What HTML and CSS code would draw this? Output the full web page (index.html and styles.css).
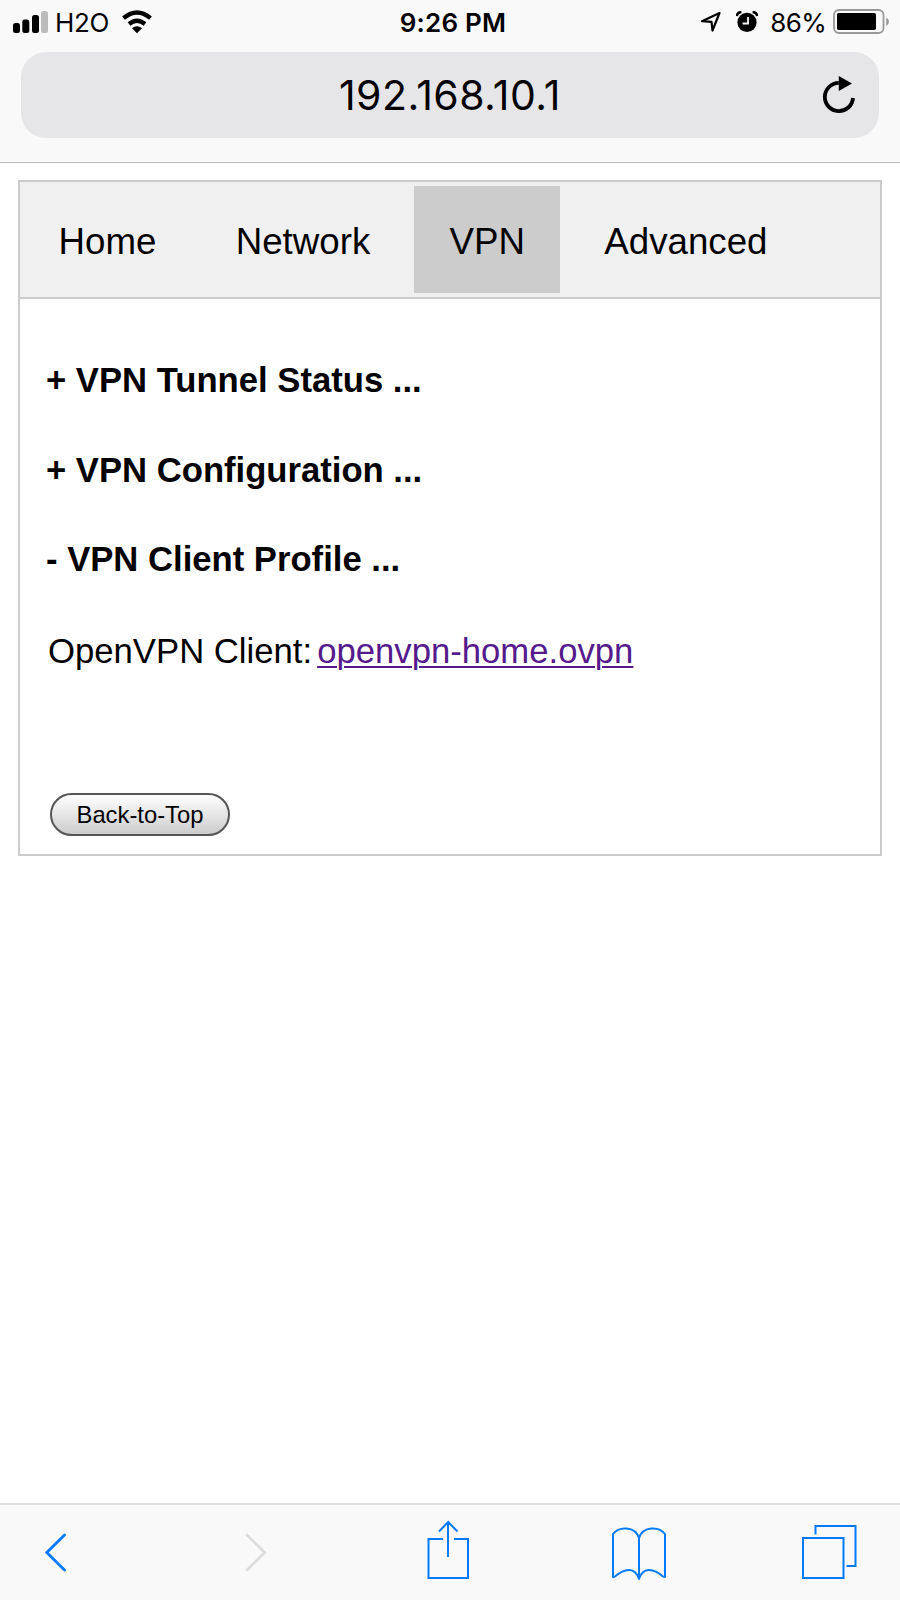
FILE: index.html
```
<!DOCTYPE html>
<html lang="en">
<head>
    <meta charset="UTF-8">
    <meta name="viewport" content="width=device-width, initial-scale=1.0">
    <title>VPN</title>
    <link rel="stylesheet" href="styles.css">
</head>
<body>
    <header class="browser-top">
        <div class="status-bar">
            <div class="status-left">
                <svg class="signal" width="36" height="24" viewBox="0 0 36 24">
                    <rect x="0" y="13" width="7" height="10" rx="2.5"/>
                    <rect x="9.3" y="9.5" width="7" height="13.5" rx="2.5"/>
                    <rect x="19" y="5" width="7" height="18" rx="2.5"/>
                    <rect x="28" y="1" width="7" height="22" rx="2.5" fill="#bbb"/>
                </svg>
                <span class="carrier">H2O</span>
                <svg class="wifi" width="32" height="24" viewBox="0 0 32 24">
                    <path d="M2.5 8.2Q16-3.2 29.5 8.2M8 14Q16 7.5 24 14" fill="none" stroke="#000" stroke-width="4.3"/>
                    <path d="M11 18.3Q16 14.2 21 18.3L16 23.2Z"/>
                </svg>
            </div>
            <span class="time">9:26 PM</span>
            <div class="status-right">
                <svg class="location" width="22" height="22" viewBox="0 0 22 22">
                    <path d="M2 10.2L19.5 2L12.5 19.5L11.5 10.8Z" fill="none" stroke="#000" stroke-width="2.2" stroke-linejoin="round"/>
                </svg>
                <svg class="alarm" width="22" height="22" viewBox="0 0 22 22">
                    <circle cx="11" cy="11.4" r="9.6"/>
                    <path d="M.8 5.2Q1.2 1 5.4 1.2M21.2 5.2Q20.8 1 16.6 1.2" fill="none" stroke="#000" stroke-width="2.6"/>
                    <path d="M12 6v6.5H6.5" fill="none" stroke="#f9f9f9" stroke-width="1.8"/>
                </svg>
                <span class="percent">86%</span>
                <svg class="battery" width="57" height="26" viewBox="0 0 57 26">
                    <rect x="1" y="1" width="49.5" height="23" rx="5" fill="none" stroke="#999" stroke-width="1.8"/>
                    <rect x="4" y="4" width="39" height="17" rx="1.8"/>
                    <path d="M53.2 8.5Q56 10 56 12.7Q56 15.5 53.2 17Z" fill="#999"/>
                </svg>
            </div>
        </div>
        <div class="address-bar">
            <span class="url">192.168.10.1</span>
            <svg class="reload" width="34" height="40" viewBox="0 0 34 40">
                <path d="M16.8 7.9A14.1 14.1 0 1 0 31 23" fill="none" stroke="#000" stroke-width="3.8"/>
                <path d="M16.8 1L30 8.5L16.8 16Z"/>
            </svg>
        </div>
    </header>

    <main class="page">
        <div class="panel">
            <nav class="tabs">
                <a class="tab home">Home</a>
                <a class="tab network">Network</a>
                <a class="tab vpn active">VPN</a>
                <a class="tab advanced">Advanced</a>
            </nav>
            <div class="content">
                <h3 class="tunnel">+ VPN Tunnel Status ...</h3>
                <h3 class="config">+ VPN Configuration ...</h3>
                <h3 class="profile">- VPN Client Profile ...</h3>
                <p class="client"><span>OpenVPN Client:</span><a href="#">openvpn-home.ovpn</a></p>
                <button class="to-top">Back-to-Top</button>
            </div>
        </div>
    </main>

    <footer class="toolbar">
        <svg class="back" width="22" height="40" viewBox="0 0 22 40">
            <path d="M19.5 2L1.8 19.5L19.5 37" stroke-width="2.8" stroke-linecap="round"/>
        </svg>
        <svg class="forward" width="22" height="40" viewBox="0 0 22 40">
            <path d="M2 2L19.7 19.5L2 37" stroke-width="2.8" stroke-linecap="round"/>
        </svg>
        <svg class="share" width="42" height="60" viewBox="0 0 42 60">
            <path d="M16 19H1.5V58H41V19H27M21 37V2M12 11.5L21.2 2L30.5 11.5"/>
        </svg>
        <svg class="book" width="56" height="54" viewBox="0 0 56 54">
            <path d="M28 11C24-1 8-1 2 7V49Q1.7 51 4 49.5C14 41 24 40 28 52C32 40 42 41 52 49.5Q54.3 51 54 49V7C48-1 32-1 28 11V52" stroke-linejoin="round"/>
        </svg>
        <svg class="pages" width="56" height="56" viewBox="0 0 56 56">
            <path d="M2 14H42.5V54H2ZM14.5 10.5V2H54.5V42H45.5"/>
        </svg>
    </footer>
</body>
</html>
```

FILE: styles.css
```
* {
    margin: 0;
    padding: 0;
    box-sizing: border-box;
}

body {
    display: flex;
    flex-direction: column;
    height: 1600px;
    background-color: #fff;
    color: #000;
    font-family: "Liberation Sans", Arial, sans-serif;
}

svg {
    display: block;
    flex: none;
}

/* Browser top */
.browser-top {
    height: 163px;
    background-color: #f9f9f9;
    border-bottom: 1px solid #b8b8b8;
    font-family: Inter, sans-serif;
}

.status-bar {
    display: grid;
    grid-template-columns: 1fr auto 1fr;
    height: 52px;
    padding: 0 10px 0 13px;
    font-size: 26px;
    line-height: 32px;
    white-space: nowrap;
}

.status-left,
.status-right {
    display: flex;
    align-items: flex-start;
}

.status-right {
    justify-content: flex-end;
}

.signal {
    margin-top: 10px;
}

.carrier {
    margin: 7px 0 0 6px;
    letter-spacing: -0.4px;
}

.wifi {
    margin: 10px 0 0 12px;
}

.time {
    padding: 7px 0 0 3px;
    font-weight: 600;
    letter-spacing: 0.2px;
}

.location {
    margin: 11px 14px 0 0;
}

.alarm {
    margin: 11px 12px 0 0;
}

.percent {
    margin: 7px 7px 0 0;
    letter-spacing: -0.7px;
}

.battery {
    margin-top: 9px;
}

.address-bar {
    display: grid;
    grid-template-columns: 1fr auto 1fr;
    align-items: center;
    height: 86px;
    margin: 0 21px;
    padding: 0 23px;
    border-radius: 25px;
    background-color: #e6e6e8;
}

.url {
    grid-column: 2;
    font-size: 41px;
    line-height: 50px;
    letter-spacing: 0.45px;
}

.reload {
    justify-self: end;
}

/* Router page */
.page {
    flex: 1;
    padding: 17px 18px 0;
}

.panel {
    height: 676px;
    border: 2px solid #ccc;
}

.tabs {
    display: flex;
    gap: 8.3px;
    height: 117px;
    padding: 4px 3px;
    background-color: #f0f0f0;
    border-bottom: 2px solid #ccc;
}

.tab {
    padding: 35px 35.5px 0;
    height: 107px;
    font-size: 36.7px;
    line-height: 42px;
}

.active {
    background-color: #ccc;
}

.content {
    padding: 57px 26px 0;
}

h3 {
    height: 89.7px;
    font-size: 34.65px;
    line-height: 49px;
    white-space: nowrap;
}

.client {
    display: flex;
    gap: 5px;
    height: 168px;
    padding: 1px 0 0 2px;
    font-size: 34.7px;
    line-height: 50px;
    white-space: nowrap;
}

.client a {
    color: #551a8b;
    text-decoration-thickness: 2px;
    text-underline-offset: 3px;
}

.to-top {
    display: block;
    width: 180px;
    height: 43px;
    margin-left: 4px;
    border: 2px solid #555;
    border-radius: 22px;
    background: linear-gradient(#fff, #ccc);
    color: #000;
    font-family: "Liberation Sans", Arial, sans-serif;
    font-size: 23.8px;
}

/* Browser toolbar */
.toolbar {
    display: flex;
    height: 97px;
    background-color: #f9f9f9;
    border-top: 2px solid #e0e0e0;
}

.toolbar svg {
    fill: none;
    stroke: #007aff;
    stroke-width: 2;
}

.toolbar .back {
    margin: 28px 0 0 45px;
}

.toolbar .forward {
    margin: 28px 0 0 178px;
    stroke: #ddd;
}

.toolbar .share {
    margin: 15px 0 0 160px;
}

.toolbar .book {
    margin: 22px 0 0 142px;
}

.toolbar .pages {
    margin: 19px 0 0 134px;
}
```
